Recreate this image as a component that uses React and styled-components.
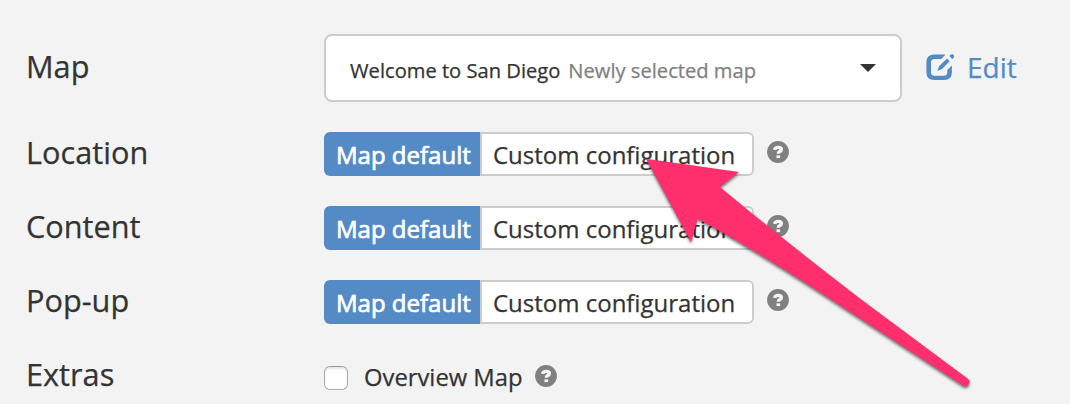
import React from "react";
import styled, { createGlobalStyle } from "styled-components";

const GlobalStyle = createGlobalStyle`
  * { box-sizing: border-box; }
  body {
    margin: 0;
    background: #f3f3f3;
    color: #333;
    font-family: "Open Sans", "Noto Sans", sans-serif;
    -webkit-text-stroke: 0.25px currentColor;
    overflow: hidden;
  }
`;

const Form = styled.form`
  position: relative;
  display: flex;
  flex-direction: column;
  gap: 30px;
  height: 404px;
  padding: 34px 0 0 26px;
  overflow: hidden;
`;

const Row = styled.div`
  display: flex;
  flex: none;
  align-items: center;
  height: ${(p) => (p.$tall ? 68 : 44)}px;
`;

const Label = styled.div`
  width: 298px;
  padding-bottom: 4px;
  font-size: 30.7px;
  line-height: 40px;
`;

const Select = styled.div`
  display: flex;
  align-items: center;
  width: 578px;
  height: 68px;
  padding: 3px 24px 0;
  border: 2px solid #ccc;
  border-radius: 8px;
  background: #fff;
  font-size: 20.15px;
  line-height: 28px;
  white-space: nowrap;
`;

const Note = styled.span`
  margin-left: 8px;
  color: #808080;
`;

const Caret = styled.span`
  margin: 0 0 4px auto;
  border: 8px solid transparent;
  border-top-color: #333;
  border-bottom: 0;
`;

const EditLink = styled.a`
  display: flex;
  align-items: center;
  gap: 12px;
  margin: 0 0 2px 24px;
  color: #548bc6;
  font-size: 28px;
  line-height: 36px;

  svg { display: block; margin-bottom: 2px; }
`;

const Segments = styled.div`
  display: flex;
  width: 430px;
  height: 44px;
`;

const Segment = styled.div`
  width: ${(p) => (p.$active ? 156 : 274)}px;
  padding: ${(p) => (p.$active ? "6px 0 0 12px" : "4px 0 0 11px")};
  border: ${(p) => (p.$active ? "0" : "2px solid #ccc")};
  border-radius: ${(p) => (p.$active ? "6px 0 0 6px" : "0 6px 6px 0")};
  background: ${(p) => (p.$active ? "#548bc6" : "#fff")};
  color: ${(p) => (p.$active ? "#fff" : "#333")};
  -webkit-text-stroke: ${(p) => (p.$active ? "0.7px #fff" : "0.25px #333")};
  font-size: 24px;
  line-height: 34px;
  white-space: nowrap;
`;

const HelpMark = styled.span`
  flex: none;
  margin: 0 0 ${(p) => (p.$low ? "1px 12px" : "5px 13px")};
  height: 22px;
  svg { display: block; }
`;

const Checkbox = styled.span`
  width: 24px;
  height: 24px;
  margin-top: 4px;
  border: 1px solid #aaa;
  border-top-color: #999;
  border-radius: 6px;
  background: #fff;
  box-shadow: inset 0 2px 2px #e5e5e5;
`;

const CheckLabel = styled.span`
  margin: 1px 0 0 16px;
  font-size: 23.8px;
  line-height: 32px;
`;

const Pointer = styled.svg`
  position: absolute;
  inset: 0;
  pointer-events: none;
  filter: drop-shadow(0 2px 1.5px rgba(0, 0, 0, 0.55));
`;

function Help({ low }) {
  return (
    <HelpMark $low={low}>
      <svg width="22" height="22" viewBox="0 0 22 22">
        <circle cx="11" cy="11" r="10.9" fill="#808080" />
        <path
          d="M7.6 8.8Q8.2 6.4 11.2 6.4Q14.4 6.4 14.4 8.5Q14.4 9.7 12.8 10.5Q11.3 11.3 11.3 12.8"
          fill="none"
          stroke="#f3f3f3"
          strokeWidth="3.4"
        />
        <rect x="9.5" y="14.3" width="3.6" height="2.8" fill="#f3f3f3" />
      </svg>
    </HelpMark>
  );
}

function EditIcon() {
  return (
    <svg width="29" height="28" viewBox="0 0 29 28">
      <path
        d="M19.5 2.4L15.3 6.9H8.6Q5 6.9 5 10.5V20.2Q5 23.8 8.6 23.8H17.8Q21.3 23.8 21.3 20.2V18L25.9 13.4V20.2Q25.9 28 18.2 28H8.2Q0.4 28 0.4 20.2V10.2Q0.4 2.4 8.2 2.4Z"
        fill="#548bc6"
      />
      <path d="M11.3 18.9L13.2 14.1L21 6.5L23.7 9.2L16 16.9Z" fill="#548bc6" />
      <path d="M23.4 4L24.9 2.5Q26 1.5 27.1 2.5L27.8 3.2Q28.8 4.3 27.8 5.4L26.2 6.9Z" fill="#548bc6" />
    </svg>
  );
}

function ConfigRow({ label }) {
  return (
    <Row>
      <Label>{label}</Label>
      <Segments>
        <Segment $active>Map default</Segment>
        <Segment>Custom configuration</Segment>
      </Segments>
      <Help />
    </Row>
  );
}

export default function App() {
  return (
    <>
      <GlobalStyle />
      <Form>
        <Row $tall>
          <Label>Map</Label>
          <Select>
            <span>Welcome to San Diego</span>
            <Note>Newly selected map</Note>
            <Caret />
          </Select>
          <EditLink>
            <EditIcon />
            Edit
          </EditLink>
        </Row>
        <ConfigRow label="Location" />
        <ConfigRow label="Content" />
        <ConfigRow label="Pop-up" />
        <Row>
          <Label>Extras</Label>
          <Checkbox />
          <CheckLabel>Overview Map</CheckLabel>
          <Help low />
        </Row>
        <Pointer width="1070" height="404" viewBox="0 0 1070 404">
          <path
            d="M646 158.7L739 172L720 187Q780 237 860 298.5L967.5 378.5A4 4 0 0 1 963 385.5L860 318.5Q760 252 697.5 218.7L691 242Z"
            fill="#ff2f6d"
          />
        </Pointer>
      </Form>
    </>
  );
}
